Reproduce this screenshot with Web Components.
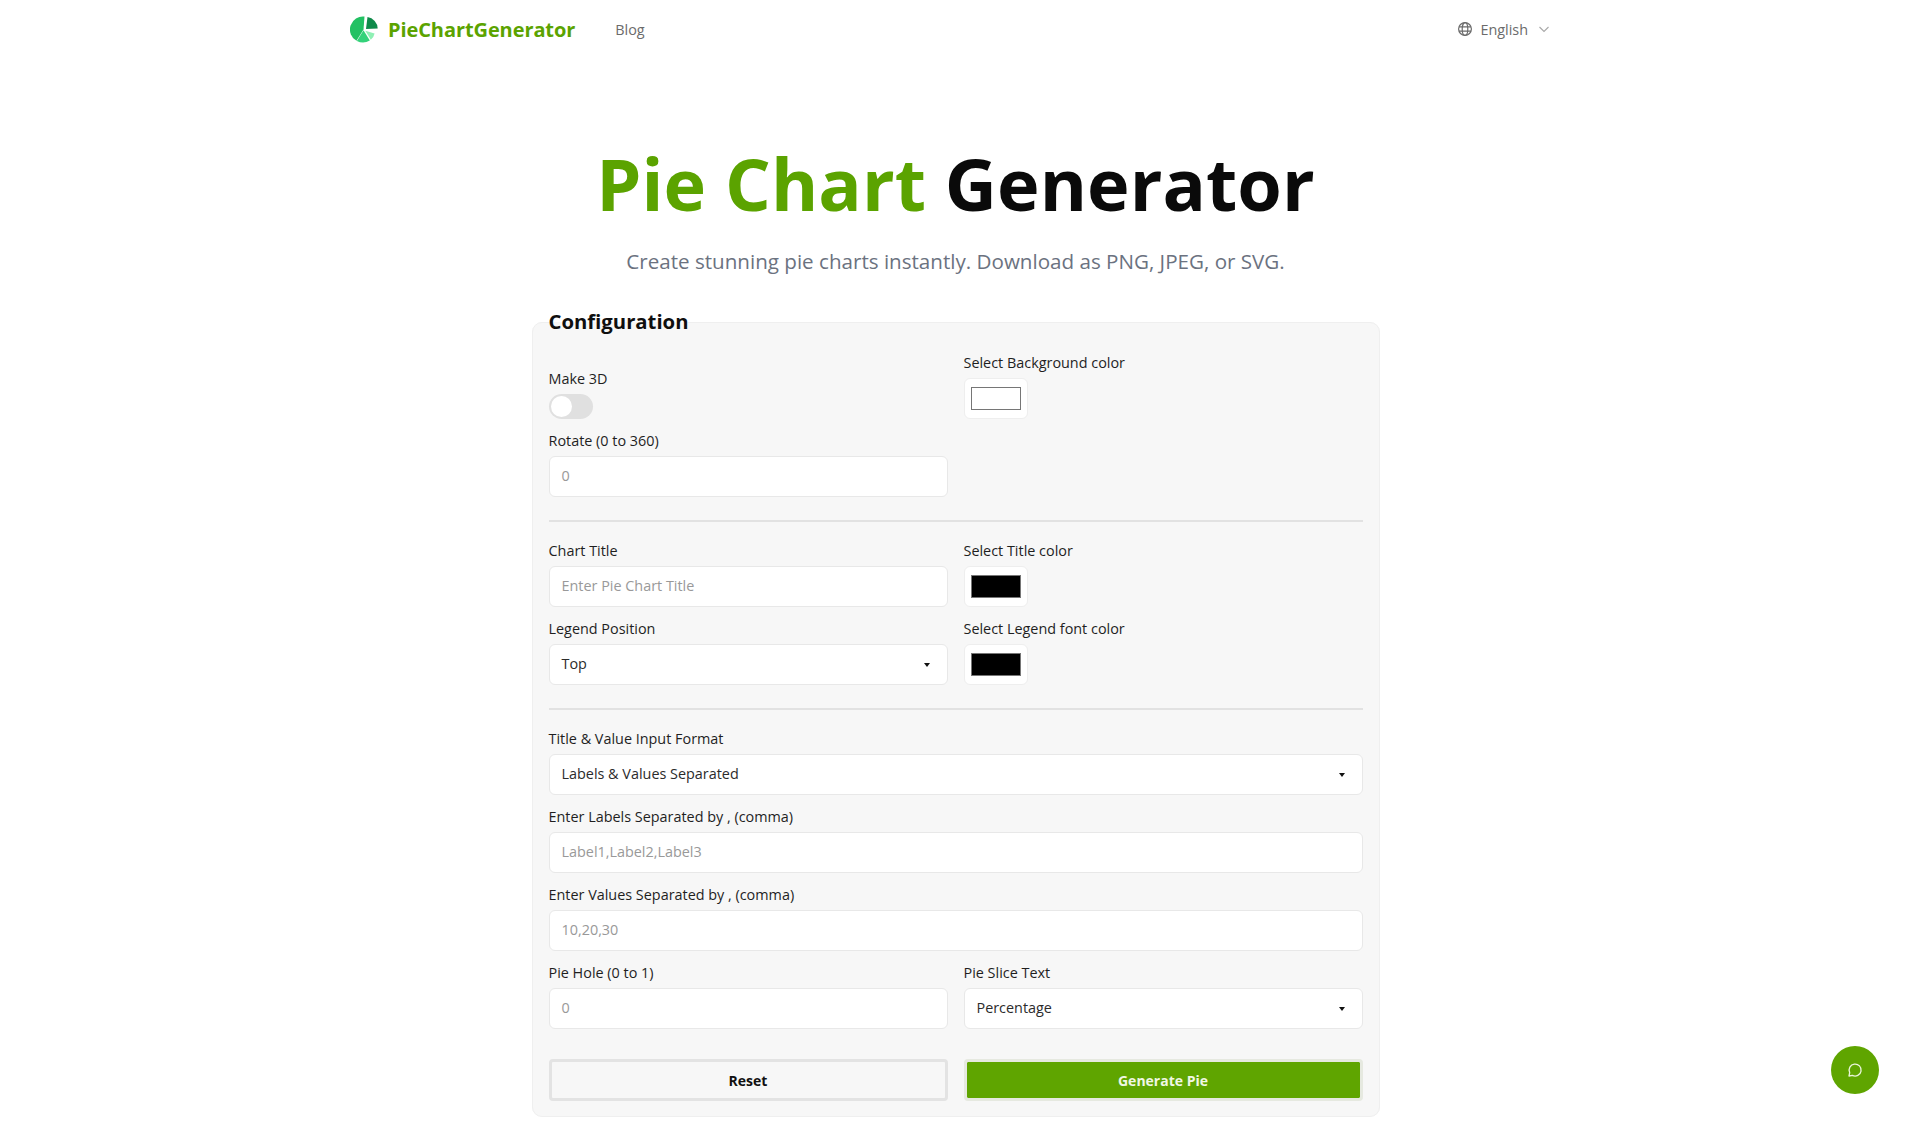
<!DOCTYPE html>
<html lang="en">
<head>
<meta charset="utf-8">
<title>Pie Chart Generator</title>
<style>
    html, body { margin: 0; padding: 0; background: #fff; overflow: hidden; }
    body { font-family: "Open Sans", "Noto Sans", sans-serif; color: #1f1f1f; }
</style>
</head>
<body>
<site-header></site-header>
<page-hero></page-hero>
<config-panel>
    <form-row slot="top" bottom>
        <form-field label="Make 3D"><toggle-switch></toggle-switch></form-field>
        <form-field label="Select Background color"><color-swatch color="#ffffff"></color-swatch></form-field>
    </form-row>
    <form-row slot="top">
        <form-field label="Rotate (0 to 360)"><text-box placeholder>0</text-box></form-field>
    </form-row>

    <form-row slot="chart">
        <form-field label="Chart Title"><text-box placeholder>Enter Pie Chart Title</text-box></form-field>
        <form-field label="Select Title color"><color-swatch color="#000000"></color-swatch></form-field>
    </form-row>
    <form-row slot="chart">
        <form-field label="Legend Position"><text-box select>Top</text-box></form-field>
        <form-field label="Select Legend font color"><color-swatch color="#000000"></color-swatch></form-field>
    </form-row>

    <form-field slot="data" label="Title &amp; Value Input Format"><text-box select>Labels &amp; Values Separated</text-box></form-field>
    <form-field slot="data" label="Enter Labels Separated by , (comma)"><text-box placeholder>Label1,Label2,Label3</text-box></form-field>
    <form-field slot="data" label="Enter Values Separated by , (comma)"><text-box placeholder>10,20,30</text-box></form-field>
    <form-row slot="data">
        <form-field label="Pie Hole (0 to 1)"><text-box placeholder>0</text-box></form-field>
        <form-field label="Pie Slice Text"><text-box select>Percentage</text-box></form-field>
    </form-row>

    <form-row slot="actions">
        <action-button>Reset</action-button>
        <action-button primary>Generate Pie</action-button>
    </form-row>
</config-panel>
<chat-fab></chat-fab>

<script>
class SiteHeader extends HTMLElement {
    constructor() {
        super();
        this.attachShadow({ mode: 'open' });
        this.shadowRoot.innerHTML = `
            <style>
                :host { display: block; }
                nav {
                    width: 1213px;
                    height: 59px;
                    margin: 0 auto;
                    display: flex;
                    align-items: center;
                    box-sizing: border-box;
                    padding: 0 0 1px 1px;
                }
                .logo { display: flex; align-items: center; gap: 10px; margin-right: 40px; }
                .logo span { font-size: 20px; letter-spacing: -0.09px; font-weight: 700; color: #5ba300; }
                .blog { font-size: 14.4px; color: #6b6b6b; }
                .lang { margin-left: auto; display: flex; align-items: center; color: #6b6b6b; font-size: 14.4px; padding-right: 12px; }
                .lang span { margin: 0 10px 0 7px; }
            </style>
            <nav>
                <div class="logo">
                    <svg width="28" height="28" viewBox="0 -1.500 28 28">
                        <path d="M13.500 13L14.500 .1A13 13 0 0 0 6.500 24.300Z" fill="#22c163"/>
                        <path d="M13.500 13.800L6.900 24.500A13 13 0 0 0 19.800 24Z" fill="#34d27a"/>
                        <path d="M15.300 14.200L24.600 16.900A11 11 0 0 1 20.800 23.200Z" fill="#8ff0b4"/>
                        <path d="M16 12.500L17.500 .5A12 12 0 0 1 27.700 12Z" fill="#0f8a4a"/>
                    </svg>
                    <span>PieChartGenerator</span>
                </div>
                <div class="blog">Blog</div>
                <div class="lang">
                    <svg width="16" height="16" viewBox="0 0 16 16" fill="none" stroke="#6b6b6b" stroke-width="1.2">
                        <circle cx="8" cy="8" r="6.4"/>
                        <ellipse cx="8" cy="8" rx="2.8" ry="6.4"/>
                        <path d="M2 5.8h12M2 10.2h12"/>
                    </svg>
                    <span>English</span>
                    <svg width="12" height="12" viewBox="0 0 12 12" fill="none" stroke="#a8a8a8" stroke-width="1.1">
                        <path d="M1.5 4l4.5 4.5L10.500 4"/>
                    </svg>
                </div>
            </nav>
        `;
    }
}

class PageHero extends HTMLElement {
    constructor() {
        super();
        this.attachShadow({ mode: 'open' });
        this.shadowRoot.innerHTML = `
            <style>
                :host { display: block; text-align: center; padding-top: 72px; }
                h1 { margin: 0; font-size: 72px; letter-spacing: 0.08px; line-height: 104px; font-weight: 700; color: #0a0a0a; }
                h1 span { color: #5ba300; }
                p { margin: 11px 0 0; font-size: 20.6px; line-height: 30px; color: #6b7280; }
            </style>
            <h1><span>Pie Chart</span> Generator</h1>
            <p>Create stunning pie charts instantly. Download as PNG, JPEG, or SVG.</p>
        `;
    }
}

class ConfigPanel extends HTMLElement {
    constructor() {
        super();
        this.attachShadow({ mode: 'open' });
        this.shadowRoot.innerHTML = `
            <style>
                :host { display: block; width: 848px; margin: 30px auto 0; }
                fieldset {
                    margin: 0;
                    padding: 0 16px 15px;
                    min-width: 0;
                    border: 1px solid #efefef;
                    border-radius: 10px;
                    background: #f7f7f7;
                }
                legend { padding: 0 0 2px; font-size: 20.3px; font-weight: 700; line-height: 30px; color: #0f0f0f; }
                section { display: flex; flex-direction: column; gap: 10px; }
                hr { border: 0; height: 2px; background: #e2e2e2; margin: 22px 0 18px; }
                .top { margin-top: 14px; }
                .actions { margin-top: 29px; }
            </style>
            <fieldset>
                <legend>Configuration</legend>
                <section class="top"><slot name="top"></slot></section>
                <hr>
                <section><slot name="chart"></slot></section>
                <hr>
                <section><slot name="data"></slot></section>
                <section class="actions"><slot name="actions"></slot></section>
            </fieldset>
        `;
    }
}

class FormRow extends HTMLElement {
    constructor() {
        super();
        this.attachShadow({ mode: 'open' });
        this.shadowRoot.innerHTML = `
            <style>
                :host { display: grid; grid-template-columns: 1fr 1fr; column-gap: 16px; }
                :host([bottom]) { align-items: end; }
            </style>
            <slot></slot>
        `;
    }
}

class FormField extends HTMLElement {
    constructor() {
        super();
        this.attachShadow({ mode: 'open' });
        this.shadowRoot.innerHTML = `
            <style>
                :host { display: block; min-width: 0; }
                label { display: block; font-size: 14.4px; line-height: 22px; color: #1f1f1f; margin-bottom: 4px; }
            </style>
            <label></label>
            <slot></slot>
        `;
    }

    connectedCallback() {
        this.shadowRoot.querySelector('label').textContent = this.getAttribute('label');
    }
}

class TextBox extends HTMLElement {
    constructor() {
        super();
        this.attachShadow({ mode: 'open' });
        this.shadowRoot.innerHTML = `
            <style>
                :host {
                    display: flex;
                    align-items: center;
                    justify-content: space-between;
                    box-sizing: border-box;
                    height: 41px;
                    margin-bottom: 1px;
                    padding: 0 17px 2px 12px;
                    background: #fff;
                    border: 1px solid #e8e8e8;
                    border-radius: 6px;
                    font-size: 14.4px;
                    color: #2b2b2b;
                }
                :host([placeholder]) { color: #999; }
                i {
                    display: none;
                    width: 0;
                    height: 0;
                    margin-top: 2px;
                    border: 3.500px solid transparent;
                    border-top: 4px solid #111;
                    border-bottom: 0;
                }
                :host([select]) i { display: block; }
            </style>
            <slot></slot>
            <i></i>
        `;
    }
}

class ColorSwatch extends HTMLElement {
    constructor() {
        super();
        this.attachShadow({ mode: 'open' });
        this.shadowRoot.innerHTML = `
            <style>
                :host {
                    display: flex;
                    align-items: center;
                    justify-content: center;
                    box-sizing: border-box;
                    width: 64px;
                    height: 41px;
                    margin-bottom: 1px;
                    background: #fff;
                    border: 1px solid #eee;
                    border-radius: 6px;
                }
                div { box-sizing: border-box; width: 50px; height: 23px; border: 1px solid #767676; }
            </style>
            <div></div>
        `;
    }

    connectedCallback() {
        this.shadowRoot.querySelector('div').style.background = this.getAttribute('color');
    }
}

class ToggleSwitch extends HTMLElement {
    constructor() {
        super();
        this.attachShadow({ mode: 'open' });
        this.shadowRoot.innerHTML = `
            <style>
                :host {
                    display: flex;
                    align-items: center;
                    box-sizing: border-box;
                    width: 44px;
                    height: 25px;
                    margin-bottom: 1px;
                    padding: 2px;
                    border-radius: 13px;
                    background: #e0e0e0;
                }
                b { width: 21px; height: 21px; border-radius: 50%; background: #fff; }
            </style>
            <b></b>
        `;
    }
}

class ActionButton extends HTMLElement {
    constructor() {
        super();
        this.attachShadow({ mode: 'open' });
        this.shadowRoot.innerHTML = `
            <style>
                :host {
                    display: flex;
                    align-items: center;
                    justify-content: center;
                    box-sizing: border-box;
                    height: 42px;
                    border: 3px solid #e3e3e3;
                    border-radius: 4px;
                    font-size: 14px;
                    font-weight: 700;
                    color: #111;
                }
                :host([primary]) { background: #5fa500; color: #f0f7e4; background-clip: padding-box; border-color: #e6e9e0; }
            </style>
            <slot></slot>
        `;
    }
}

class ChatFab extends HTMLElement {
    constructor() {
        super();
        this.attachShadow({ mode: 'open' });
        this.shadowRoot.innerHTML = `
            <style>
                :host {
                    position: fixed;
                    right: 32px;
                    bottom: 32px;
                    width: 48px;
                    height: 48px;
                    display: flex;
                    align-items: center;
                    justify-content: center;
                    border-radius: 50%;
                    background: #5fa500;
                }
            </style>
            <svg width="16" height="16" viewBox="0 0 16 16" fill="none" stroke="#eaf5d9" stroke-width="1.300" stroke-linejoin="round">
                <path d="M2 14l.7-3.400A6 6 0 1 1 5.400 13.400Z"/>
            </svg>
        `;
    }
}

customElements.define('site-header', SiteHeader);
customElements.define('page-hero', PageHero);
customElements.define('config-panel', ConfigPanel);
customElements.define('form-row', FormRow);
customElements.define('form-field', FormField);
customElements.define('text-box', TextBox);
customElements.define('color-swatch', ColorSwatch);
customElements.define('toggle-switch', ToggleSwitch);
customElements.define('action-button', ActionButton);
customElements.define('chat-fab', ChatFab);
</script>
</body>
</html>
